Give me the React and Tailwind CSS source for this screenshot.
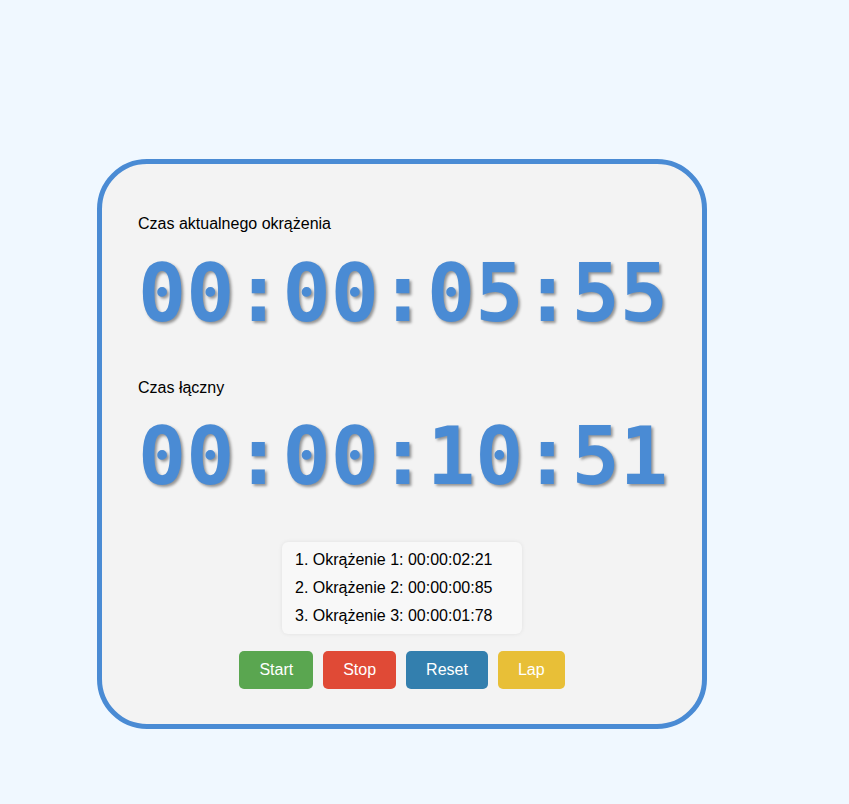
export default function App() {
  const laps = [
    "1. Okrążenie 1: 00:00:02:21",
    "2. Okrążenie 2: 00:00:00:85",
    "3. Okrążenie 3: 00:00:01:78",
  ];
  const digit =
    "font-['DejaVu_Sans_Mono',monospace] font-bold text-[80px] leading-[80px] text-[#4a8bd4] whitespace-nowrap [text-shadow:2px_2px_3px_rgba(0,0,0,0.4)]";
  return (
    <div className="min-h-screen bg-[#f0f8ff] pt-[159px] pl-[97px] font-['Liberation_Sans',Arial,sans-serif]">
      <div className="w-[610px] h-[570px] rounded-[50px] border-[5px] border-[#4a8bd4] bg-[#f3f3f3] pt-[51px] px-[36px] flex flex-col">
        <div className="text-[16px] leading-[18px] text-black">Czas aktualnego okrążenia</div>
        <div className={`${digit} mt-[21px]`}>00:00:05:55</div>
        <div className="text-[16px] leading-[18px] text-black mt-[45px]">Czas łączny</div>
        <div className={`${digit} mt-[20px]`}>00:00:10:51</div>
        <div className="self-center mt-[45px] w-[240px] rounded-[6px] bg-[#f8f8f8] shadow-[0_0_4px_rgba(0,0,0,0.08)] pl-[13px] py-[4px]">
          {laps.map((l) => (
            <div key={l} className="text-[16px] leading-[28px] text-black">{l}</div>
          ))}
        </div>
        <div className="self-center mt-[17px] flex gap-[10px]">
          <button className="h-[38px] px-5 rounded-[5px] bg-[#5aa650] text-white text-[16px]">Start</button>
          <button className="h-[38px] px-5 rounded-[5px] bg-[#e04a36] text-white text-[16px]">Stop</button>
          <button className="h-[38px] px-5 rounded-[5px] bg-[#337fae] text-white text-[16px]">Reset</button>
          <button className="h-[38px] px-5 rounded-[5px] bg-[#e8bf37] text-white text-[16px]">Lap</button>
        </div>
      </div>
    </div>
  );
}
